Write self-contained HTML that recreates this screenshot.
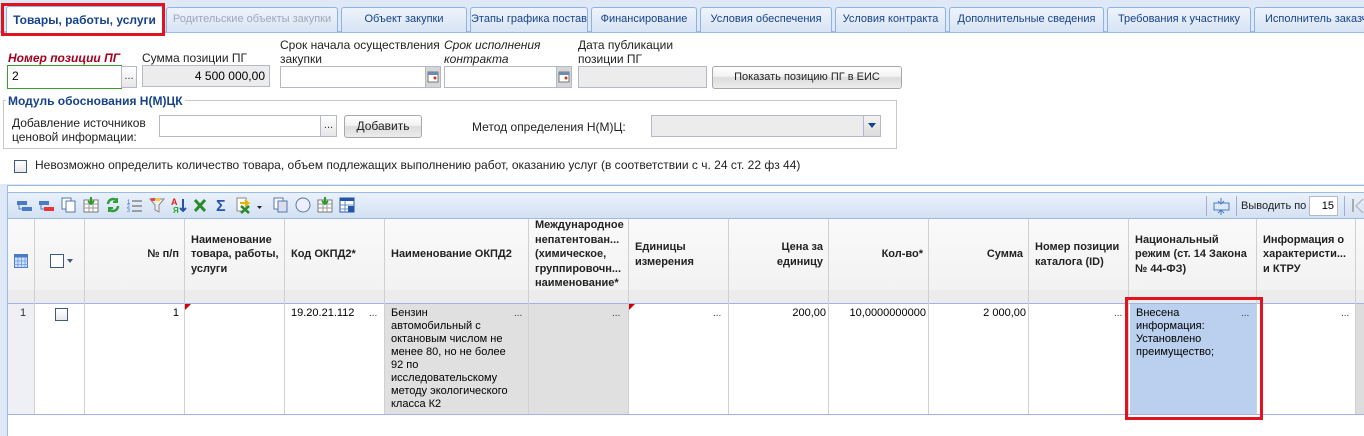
<!DOCTYPE html>
<html><head><meta charset="utf-8"><style>
*{box-sizing:border-box;margin:0;padding:0}
body{width:1364px;height:436px;background:#fff;font-family:"Liberation Sans",Arial,sans-serif;font-size:12px;color:#000;position:relative;overflow:hidden}
.a{position:absolute}
.tabbar{left:0;top:0;width:1364px;height:33px;background:#dfe8f6;border-bottom:2px solid #99bbe8}
.tab{position:absolute;top:7px;height:25px;border:1px solid #8db2e3;border-bottom:none;border-radius:3px 3px 0 0;background:linear-gradient(#eef3fb,#d7e4f5);color:#15428b;font-size:11px;line-height:23px;text-align:center;white-space:nowrap;overflow:hidden}
.inp{position:absolute;border:1px solid #b5b8c8;background:#fff;height:22px;font-size:12px;line-height:20px;padding:0 4px}
.gray{background:#ececec}
.dots{position:absolute;border:1px solid #b5b8c8;background:linear-gradient(#fff,#e6e6e6);height:22px;font-size:11px;line-height:18px;text-align:center;color:#333}
.btn{position:absolute;border:1px solid #a8a8a8;border-radius:3px;background:linear-gradient(#fff 0,#f2f2f2 45%,#dcdcdc 50%,#ececec 100%);text-align:center;font-size:11px;color:#222}
.lbl{position:absolute;font-size:12px;color:#222;line-height:14px}
.hd{position:absolute;top:219px;height:71px;font-weight:bold;font-size:11px;line-height:14.5px;color:#222;display:flex;align-items:center;padding:0 6px}
.vl{position:absolute;width:1px;background:#d0d0d0}
.cell{position:absolute;top:304px;font-size:11px;line-height:13px;padding:3px 6px}
.dd{position:absolute;font-size:10px;color:#333}
</style></head><body>
<div class="a tabbar"></div>
<div class="tab" style="left:6px;width:157px;top:6px;height:27px;background:#fff;border-color:#8db2e3;font-weight:bold;color:#15428b;line-height:26px;font-size:12px">Товары, работы, услуги</div>
<div class="tab" style="left:166px;width:172px;color:#a0a8b8">Родительские объекты закупки</div>
<div class="tab" style="left:341px;width:126px">Объект закупки</div>
<div class="tab" style="left:470px;width:118px">Этапы графика поставки</div>
<div class="tab" style="left:591px;width:106px">Финансирование</div>
<div class="tab" style="left:700px;width:132px">Условия обеспечения</div>
<div class="tab" style="left:835px;width:111px">Условия контракта</div>
<div class="tab" style="left:949px;width:155px">Дополнительные сведения</div>
<div class="tab" style="left:1107px;width:144px">Требования к участнику</div>
<div class="tab" style="left:1254px;width:120px;text-align:left;padding-left:10px">Исполнитель заказчика</div>
<div class="a" style="left:1px;top:3px;width:164px;height:33px;border:3px solid #e0131f"></div>

<div class="lbl" style="left:8px;top:51px;color:#a5001e;font-weight:bold;font-style:italic">Номер позиции ПГ</div>
<div class="inp" style="left:7px;top:65px;width:115px;height:24px;border-color:#3c9c30">2</div>
<div class="dots" style="left:121px;top:66px;width:16px">...</div>
<div class="lbl" style="left:142px;top:51px">Сумма позиции ПГ</div>
<div class="inp gray" style="left:142px;top:65px;width:128px;text-align:right">4 500 000,00</div>
<div class="lbl" style="left:280px;top:38px">Срок начала осуществления<br>закупки</div>
<div class="inp" style="left:280px;top:66px;width:146px"></div>
<div class="dots" style="left:425px;top:66px;width:16px;background:#d6d6d6"><svg width="12" height="12" style="margin-top:4px"><rect x="1" y="1" width="10" height="10" fill="#fff" stroke="#777"/><rect x="1" y="1" width="10" height="3" fill="#6d8ab5"/><circle cx="8" cy="7" r="1.5" fill="#c33"/></svg></div>
<div class="lbl" style="left:444px;top:38px;font-style:italic">Срок исполнения<br>контракта</div>
<div class="inp" style="left:444px;top:66px;width:113px"></div>
<div class="dots" style="left:556px;top:66px;width:16px;background:#d6d6d6"><svg width="12" height="12" style="margin-top:4px"><rect x="1" y="1" width="10" height="10" fill="#fff" stroke="#777"/><rect x="1" y="1" width="10" height="3" fill="#6d8ab5"/><circle cx="8" cy="7" r="1.5" fill="#c33"/></svg></div>
<div class="lbl" style="left:578px;top:38px">Дата публикации<br>позиции ПГ</div>
<div class="inp gray" style="left:578px;top:66px;width:129px"></div>
<div class="btn" style="left:712px;top:66px;width:190px;height:23px;line-height:21px">Показать позицию ПГ в ЕИС</div>

<div class="a" style="left:3px;top:100px;width:894px;height:49px;border:1px solid #c8c8c8"></div>
<div class="lbl" style="left:6px;top:94px;background:#fff;padding:0 2px;font-weight:bold;color:#15428b">Модуль обоснования Н(М)ЦК</div>
<div class="lbl" style="left:12px;top:116px">Добавление источников<br>ценовой информации:</div>
<div class="inp" style="left:159px;top:115px;width:162px"></div>
<div class="dots" style="left:320px;top:115px;width:17px">...</div>
<div class="btn" style="left:344px;top:115px;width:78px;height:23px;line-height:21px;font-size:12px">Добавить</div>
<div class="lbl" style="left:472px;top:120px">Метод определения Н(М)Ц:</div>
<div class="inp gray" style="left:651px;top:115px;width:230px"></div>
<div class="dots" style="left:863px;top:115px;width:18px;background:linear-gradient(#f4f4f4,#dcdcdc)"><svg width="8" height="6" style="margin-top:7px"><path d="M0 0L8 0L4 5z" fill="#15428b"/></svg></div>

<div class="a" style="left:14px;top:160px;width:13px;height:13px;border:1px solid #3d5a80;background:linear-gradient(#fff,#e8e8e8)"></div>
<div class="lbl" style="left:35px;top:158px">Невозможно определить количество товара, объем подлежащих выполнению работ, оказанию услуг (в соответствии с ч. 24 ст. 22 фз 44)</div>

<!-- grid -->
<div class="a" style="left:0;top:184px;width:1364px;height:252px;background:#dfe8f6"></div>
<div class="a" style="left:7px;top:185px;width:1357px;height:251px;background:#fff;border-left:1px solid #99bbe8;border-top:1px solid #99bbe8"></div>
<div class="a" style="left:8px;top:192px;width:1356px;height:27px;background:linear-gradient(#eaf1fb,#d3e1f3);border-top:1px solid #99bbe8;border-bottom:1px solid #99bbe8"></div>
<svg class="a" style="left:8px;top:196px" width="360" height="20">
<g transform="translate(9,2)"><rect x="0" y="3" width="10" height="4" fill="#4a7bc4"/><rect x="5" y="9" width="10" height="4" fill="#4a7bc4"/><path d="M2 7v4h3" stroke="#4a7bc4" fill="none"/></g>
<g transform="translate(31,2)"><rect x="0" y="3" width="10" height="4" fill="#4a7bc4"/><rect x="5" y="9" width="10" height="4" fill="#e33"/><path d="M2 7v4h3" stroke="#4a7bc4" fill="none"/></g>
<g transform="translate(53,1)"><rect x="1" y="1" width="9" height="11" fill="#fff" stroke="#5577aa"/><rect x="5" y="4" width="9" height="11" fill="#fff" stroke="#5577aa"/></g>
<g transform="translate(75,1)"><rect x="1" y="3" width="14" height="12" fill="#fff" stroke="#777"/><path d="M1 7h14M1 11h14M6 3v12M10 3v12" stroke="#999"/><path d="M8 0v7M5 4l3 3 3-3" stroke="#2a9a2a" stroke-width="2" fill="none"/></g>
<g transform="translate(97,1)"><path d="M3 7a5 5 0 0 1 9-3M13 9a5 5 0 0 1-9 3" stroke="#2e9e3a" stroke-width="2.5" fill="none"/><path d="M12 1v4h-4M4 15v-4h4" stroke="#2e9e3a" stroke-width="2" fill="none"/></g>
<g transform="translate(119,1)"><text x="0" y="7" font-size="6" fill="#36c">1</text><text x="0" y="11" font-size="5" fill="#36c">2</text><text x="0" y="15" font-size="5" fill="#36c">3</text><path d="M5 4h10M5 9h10M5 14h10" stroke="#555"/></g>
<g transform="translate(141,1)"><path d="M1 2h14l-5 6v7l-4-2v-5z" fill="#eee" stroke="#888"/><rect x="2" y="1" width="4" height="3" fill="#e44"/><rect x="7" y="1" width="4" height="3" fill="#fc3"/></g>
<g transform="translate(163,1)"><text x="0" y="8" font-size="9" font-weight="bold" fill="#d22">A</text><text x="2" y="16" font-size="8" font-weight="bold" fill="#2a2">Я</text><path d="M12 2v12M9 11l3 3 3-3" stroke="#2555a5" stroke-width="2" fill="none"/></g>
<g transform="translate(185,2)"><path d="M2 2l10 11M12 2L2 13" stroke="#2a8a2a" stroke-width="3"/></g>
<g transform="translate(207,1)"><text x="1" y="14" font-size="16" font-weight="bold" fill="#2555a5">Σ</text></g>
<g transform="translate(228,1)"><rect x="1" y="1" width="9" height="13" fill="#fff" stroke="#888"/><path d="M4 6h8l-3-3M12 6l-3 3" stroke="#e8b000" stroke-width="2" fill="none"/><path d="M5 9l8 7M13 9l-8 7" stroke="#2a8a2a" stroke-width="2.5"/></g>
<path d="M249 10h5l-2.5 3z" fill="#222"/>
<g transform="translate(265,1)"><rect x="1" y="1" width="9" height="11" fill="#fff" stroke="#5577aa"/><rect x="5" y="4" width="9" height="11" fill="#dde" stroke="#5577aa"/></g>
<g transform="translate(287,1)"><circle cx="8" cy="8" r="7" fill="#eef" stroke="#5577aa"/></g>
<g transform="translate(309,1)"><rect x="1" y="3" width="14" height="12" fill="#fff" stroke="#777"/><path d="M1 7h14M1 11h14M6 3v12M10 3v12" stroke="#999"/><path d="M8 0v7M5 4l3 3 3-3" stroke="#2a9a2a" stroke-width="2" fill="none"/></g>
<g transform="translate(331,1)"><rect x="1" y="1" width="14" height="14" fill="#fff" stroke="#2555a5"/><rect x="1" y="1" width="14" height="3" fill="#2555a5"/><path d="M1 8h14M1 12h14M6 4v11" stroke="#6a8fcf"/><rect x="9" y="9" width="6" height="6" fill="#2555a5"/></g>
</svg>
<div class="a" style="left:1206px;top:196px;width:1px;height:20px;background:#aac"></div>
<svg class="a" style="left:1213px;top:198px" width="18" height="18"><rect x="1" y="5" width="15" height="7" fill="#dde7f5" stroke="#4a7bc4"/><path d="M8 0v5M5 3l3 3 3-3M8 17v-5M5 15l3-3 3 3" stroke="#4a7bc4" fill="none"/></svg>
<div class="a" style="left:1236px;top:196px;width:1px;height:20px;background:#aac"></div>
<div class="lbl" style="left:1241px;top:199px;font-size:11px">Выводить по</div>
<div class="inp" style="left:1309px;top:196px;width:29px;height:20px;text-align:right;line-height:18px;padding:0 3px;font-size:11px">15</div>
<div class="a" style="left:1344px;top:196px;width:1px;height:20px;background:#aac"></div>
<div class="a" style="left:1352px;top:199px;width:2px;height:13px;background:#aaa"></div>
<svg class="a" style="left:1355px;top:199px" width="9" height="14"><path d="M8 0L1 7l7 7" fill="none" stroke="#aaa"/></svg>

<!-- header -->
<div class="a" style="left:8px;top:219px;width:1356px;height:85px;background:linear-gradient(#fafafa,#f0f0f0)"></div>
<div class="a" style="left:8px;top:290px;width:1356px;height:14px;background:#ececec"></div>
<div class="a" style="left:8px;top:303px;width:1356px;height:1px;background:#a3b3e6"></div>
<div class="a" style="left:8px;top:304px;width:26px;height:110px;background:#eef0f5"></div>
<div class="a" style="left:385px;top:304px;width:244px;height:110px;background:#e0e0e0"></div>
<div class="a" style="left:1130px;top:304px;width:126px;height:110px;background:#bad0ee"></div>
<div class="a" style="left:1356px;top:304px;width:8px;height:110px;background:#ddd"></div>
<div class="a" style="left:8px;top:414px;width:1356px;height:1px;background:#a3b3e6"></div>

<div class="vl" style="left:34px;top:219px;height:195px"></div>
<div class="vl" style="left:84px;top:219px;height:195px"></div>
<div class="vl" style="left:184px;top:219px;height:195px"></div>
<div class="vl" style="left:284px;top:219px;height:195px"></div>
<div class="vl" style="left:384px;top:219px;height:195px"></div>
<div class="vl" style="left:528px;top:219px;height:195px"></div>
<div class="vl" style="left:628px;top:219px;height:195px"></div>
<div class="vl" style="left:728px;top:219px;height:195px"></div>
<div class="vl" style="left:828px;top:219px;height:195px"></div>
<div class="vl" style="left:928px;top:219px;height:195px"></div>
<div class="vl" style="left:1028px;top:219px;height:195px"></div>
<div class="vl" style="left:1128px;top:219px;height:195px"></div>
<div class="vl" style="left:1256px;top:219px;height:195px"></div>
<div class="vl" style="left:1355px;top:219px;height:195px"></div>

<svg class="a" style="left:14px;top:254px" width="14" height="14"><rect x="0.5" y="0.5" width="13" height="13" fill="#cfe0f7" stroke="#4a7bc4"/><rect x="0.5" y="0.5" width="13" height="3" fill="#4a7bc4"/><path d="M0 7h14M0 10.5h14M4 3v11M7.5 3v11M11 3v11" stroke="#6a9ae0" stroke-width=".8"/></svg>
<div class="a" style="left:50px;top:254px;width:14px;height:14px;border:1px solid #3d5a80;background:#fff"></div>
<svg class="a" style="left:67px;top:259px" width="6" height="4"><path d="M0 0h6L3 4z" fill="#3d5a80"/></svg>

<div class="hd" style="left:85px;width:100px;justify-content:flex-end">№ п/п</div>
<div class="hd" style="left:185px;width:100px">Наименование товара, работы, услуги</div>
<div class="hd" style="left:285px;width:100px">Код ОКПД2*</div>
<div class="hd" style="left:385px;width:144px">Наименование ОКПД2</div>
<div class="hd" style="left:529px;width:100px;white-space:nowrap;overflow:hidden;padding-right:2px">Международное<br>непатентован...<br>(химическое,<br>группировочн...<br>наименование*</div>
<div class="hd" style="left:629px;width:100px">Единицы измерения</div>
<div class="hd" style="left:729px;width:100px;justify-content:flex-end;text-align:right">Цена за<br>единицу</div>
<div class="hd" style="left:829px;width:100px;justify-content:flex-end">Кол-во*</div>
<div class="hd" style="left:929px;width:100px;justify-content:flex-end">Сумма</div>
<div class="hd" style="left:1029px;width:100px">Номер позиции каталога (ID)</div>
<div class="hd" style="left:1129px;width:128px">Национальный режим (ст. 14 Закона № 44-ФЗ)</div>
<div class="hd" style="left:1257px;width:99px;white-space:nowrap;overflow:hidden">Информация о<br>характеристи...<br>и КТРУ</div>

<!-- data row -->
<div class="cell" style="left:14px;color:#333">1</div>
<div class="a" style="left:55px;top:308px;width:13px;height:13px;border:1px solid #3d5a80;background:linear-gradient(#fff,#e8e8e8)"></div>
<div class="cell" style="left:85px;width:100px;text-align:right">1</div>
<svg class="a" style="left:185px;top:304px" width="6" height="6"><path d="M0 0h6L0 6z" fill="#c00"/></svg>
<svg class="a" style="left:629px;top:304px" width="6" height="6"><path d="M0 0h6L0 6z" fill="#c00"/></svg>
<div class="cell" style="left:285px;width:100px">19.20.21.112</div>
<div class="dd" style="left:369px;top:308px">...</div>
<div class="cell" style="left:385px;width:132px">Бензин автомобильный с октановым числом не менее 80, но не более 92 по исследовательскому методу экологического класса К2</div>
<div class="dd" style="left:514px;top:308px">...</div>
<div class="dd" style="left:612px;top:308px">...</div>
<div class="dd" style="left:713px;top:308px">...</div>
<div class="cell" style="left:729px;width:100px;text-align:right;padding-right:3px">200,00</div>
<div class="cell" style="left:829px;width:100px;text-align:right;padding-right:3px">10,0000000000</div>
<div class="cell" style="left:929px;width:100px;text-align:right;padding-right:3px">2 000,00</div>
<div class="dd" style="left:1114px;top:308px">...</div>
<div class="cell" style="left:1130px;width:110px">Внесена информация: Установлено преимущество;</div>
<div class="dd" style="left:1241px;top:308px">...</div>
<div class="dd" style="left:1341px;top:308px">...</div>
<div class="a" style="left:1125px;top:297px;width:138px;height:123px;border:3px solid #e0131f"></div>
</body></html>
